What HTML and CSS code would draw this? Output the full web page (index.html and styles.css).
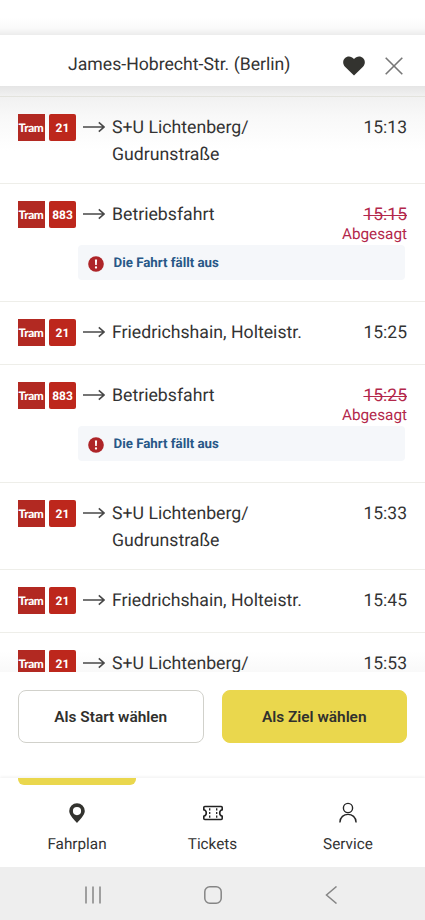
FILE: index.html
```html
<!DOCTYPE html>
<html lang="de">
<head>
<meta charset="utf-8">
<meta name="viewport" content="width=device-width, initial-scale=1">
<title>Abfahrten</title>
<link rel="stylesheet" href="styles.css">
</head>
<body>
<svg class="defs" width="0" height="0">
  <symbol id="arrow" viewBox="0 0 22 12"><path d="M0 6H21M15.800 1.300L21 6L15.800 10.700" fill="none" stroke="#484848" stroke-width="1.600"/></symbol>
  <symbol id="alert" viewBox="0 0 16 16"><circle cx="8" cy="8" r="7.800" fill="#ae2528"/><path d="M6.900 3.500h2.200l-.3 5.600H7.200z" fill="#fff"/><circle cx="8" cy="11.500" r="1.150" fill="#fff"/></symbol>
</svg>
<div class="status"></div>
<header class="header">
  <h1 class="title">James-Hobrecht-Str. (Berlin)</h1>
  <svg class="heart" viewBox="0 0 22 20"><path d="M11 19.600L2 10.800C-.4 8.300-.4 4.400 1.800 2.200C4.300-.3 8.500-.1 11 3C13.500-.1 17.700-.3 20.200 2.200C22.400 4.400 22.400 8.300 20 10.800Z" fill="#33332f"/></svg>
  <svg class="close" viewBox="0 0 18 18"><path d="M.7.7L17.300 17.300M17.300.7L.7 17.300" stroke="#777" stroke-width="1.600"/></svg>
</header>
<main class="list">
  <div class="spacer"></div>
  <section class="row tall">
    <span class="tram">Tram</span><span class="line">21</span><svg class="arrow"><use href="#arrow"/></svg>
    <span class="dest">S+U Lichtenberg/<br>Gudrunstraße</span><span class="time">15:13</span>
  </section>
  <section class="row notice">
    <span class="tram">Tram</span><span class="line">883</span><svg class="arrow"><use href="#arrow"/></svg>
    <span class="dest">Betriebsfahrt</span><span class="time cancelled"><s>15:15</s><small>Abgesagt</small></span>
    <div class="message"><svg class="alert"><use href="#alert"/></svg>Die Fahrt fällt aus</div>
  </section>
  <section class="row">
    <span class="tram">Tram</span><span class="line">21</span><svg class="arrow"><use href="#arrow"/></svg>
    <span class="dest">Friedrichshain, Holteistr.</span><span class="time">15:25</span>
  </section>
  <section class="row notice">
    <span class="tram">Tram</span><span class="line">883</span><svg class="arrow"><use href="#arrow"/></svg>
    <span class="dest">Betriebsfahrt</span><span class="time cancelled"><s>15:25</s><small>Abgesagt</small></span>
    <div class="message"><svg class="alert"><use href="#alert"/></svg>Die Fahrt fällt aus</div>
  </section>
  <section class="row tall">
    <span class="tram">Tram</span><span class="line">21</span><svg class="arrow"><use href="#arrow"/></svg>
    <span class="dest">S+U Lichtenberg/<br>Gudrunstraße</span><span class="time">15:33</span>
  </section>
  <section class="row">
    <span class="tram">Tram</span><span class="line">21</span><svg class="arrow"><use href="#arrow"/></svg>
    <span class="dest">Friedrichshain, Holteistr.</span><span class="time">15:45</span>
  </section>
  <section class="row last">
    <span class="tram">Tram</span><span class="line">21</span><svg class="arrow"><use href="#arrow"/></svg>
    <span class="dest">S+U Lichtenberg/</span><span class="time">15:53</span>
  </section>
</main>
<div class="actions">
  <button class="btn">Als Start wählen</button>
  <button class="btn primary">Als Ziel wählen</button>
</div>
<nav class="tabs">
  <a class="tab active"><svg width="22" height="22" viewBox="0 0 22 22"><path fill-rule="evenodd" d="M11 21C8.500 18 3.200 13.200 3.200 9A7.800 7.800 0 0 1 18.800 9C18.800 13.200 13.500 18 11 21ZM11 5a4.100 4.100 0 1 0 0 8.200a4.100 4.100 0 0 0 0-8.200Z" fill="#33332f"/></svg>Fahrplan</a>
  <a class="tab"><svg width="22" height="22" viewBox="0 0 22 22"><path d="M2.800 4.500H19.200Q20.200 4.500 20.200 5.500V7.800A3.300 3.300 0 0 0 20.200 14.200V16.500Q20.200 17.500 19.200 17.500H2.800Q1.800 17.500 1.800 16.500V14.200A3.300 3.300 0 0 0 1.800 7.800V5.500Q1.800 4.500 2.800 4.500Z" fill="none" stroke="#222" stroke-width="1.600"/><path d="M7.700 6.300v9.500M14.700 6.300v9.500" stroke="#222" stroke-width="1.300" stroke-dasharray="2.200 1.400"/></svg>Tickets</a>
  <a class="tab"><svg width="22" height="22" viewBox="0 0 22 22"><g fill="none" stroke="#262626" stroke-width="1.400"><circle cx="11" cy="6" r="4.600"/><path d="M2.900 20.500C2.900 9.600 19.100 9.600 19.100 20.500"/></g></svg>Service</a>
</nav>
<footer class="system">
  <svg width="18" height="18" viewBox="0 0 18 18"><path d="M2 .5v17M9 .5v17M16 .5v17"/></svg>
  <svg width="18" height="18" viewBox="0 0 18 18"><rect x=".8" y=".8" width="16.400" height="16.400" rx="5"/></svg>
  <svg width="18" height="18" viewBox="0 0 18 18"><path d="M13.500.5L3.500 9L13.500 17.500"/></svg>
</footer>
</body>
</html>
```

FILE: styles.css
```css
* { box-sizing: border-box; }
body { margin: 0; width: 425px; height: 920px; overflow: hidden; display: flex; flex-direction: column; background: #fff; color: #333; font-family: Roboto, sans-serif; text-rendering: geometricPrecision; }
.defs { position: absolute; }
.status { height: 35px; flex: none; background: linear-gradient(#fff 0 50%, #fafafa 80%, #ececec); }
.header { height: 51px; flex: none; display: flex; padding-left: 68px; background: #fff; }
.title { width: 275px; margin: 17px 0 0; font-size: 17.650px; line-height: 27px; font-weight: 400; white-space: nowrap; }
.heart { width: 22px; height: 20px; margin-top: 21px; }
.close { width: 18px; height: 18px; margin: 22px 0 0 20px; }
.list { height: 586px; flex: none; overflow: hidden; background: linear-gradient(#e5e5e5, #f1f1f1 10px, #f8f8f8 30px, #fff 65px, #fff 565px, #f9f9f9 586px); }
.spacer { height: 11px; border-bottom: 1px solid #e3e3dd; }
.row { height: 63px; padding: 17px 18px 0 17px; display: grid; grid-template-columns: 27px 27px 22px 1fr auto; grid-template-rows: 27px 16px 36px; column-gap: 5px; border-bottom: 1px solid #eeeee9; }
.row.tall { height: 87px; }
.row.notice { height: 118px; }
.row.last { height: 40px; border: 0; }
.tram, .line { height: 27px; width: 27px; color: #fff; text-align: center; background: #b22922; white-space: nowrap; }
.tram { margin-left: .5px; font: 900 11.800px/27px Lato, sans-serif; letter-spacing: -.35px; }
.line { background: #bd271c; border-radius: 2px; font-size: 12px; line-height: 28px; font-weight: 700; }
.arrow { width: 22px; height: 12px; margin: 7px 0 0 2px; }
.dest { font-size: 17.700px; line-height: 27px; white-space: nowrap; margin: 1px 0 0 4px; }
.time { font-size: 17.500px; line-height: 29px; text-align: right; }
.cancelled { width: 66px; margin-left: -20px; color: #b3274b; }
.cancelled s { display: block; text-decoration-thickness: 1px; }
.cancelled small { display: block; font-size: 15.300px; line-height: 18px; margin-top: -5px; }
.message { grid-column: 1 / -1; grid-row: 3; margin: 1px 2px 0 61px; height: 35px; padding: 2px 0 0 10px; display: flex; align-items: center; border-radius: 4px; background: #f5f7fa; color: #285887; font-size: 13.300px; line-height: 17px; font-weight: 700; }
.alert { width: 16px; height: 16px; margin-right: 9.500px; }
.actions { height: 106px; flex: none; padding: 18px 18px 0; display: flex; gap: 18px; }
.btn { flex: 1; height: 53px; padding: 1px 0 0; border: 1px solid #d1d1cb; border-radius: 8px; background: #fff; color: #30302d; font: 600 15.400px Roboto, sans-serif; }
.primary { background: #ead74d; border-color: #ead74d; }
.tabs { height: 89px; flex: none; display: grid; grid-template-columns: 118px 118px 118px; justify-content: space-between; padding: 0 18px; box-shadow: 0 -1px 3px #f0f0f0; }
.tab { display: flex; flex-direction: column; align-items: center; padding-top: 24px; font-size: 15.300px; line-height: 21px; gap: 10px; }
.active { position: relative; }
.active::before { content: ""; position: absolute; top: 0; left: 0; width: 118px; height: 7px; border-radius: 0 0 6px 6px; background: #ead74d; }
.system { height: 53px; flex: none; display: flex; justify-content: space-between; padding: 19px 84px 0; background: #eee; }
.system svg { fill: none; stroke: #858585; stroke-width: 1.500; }
```
